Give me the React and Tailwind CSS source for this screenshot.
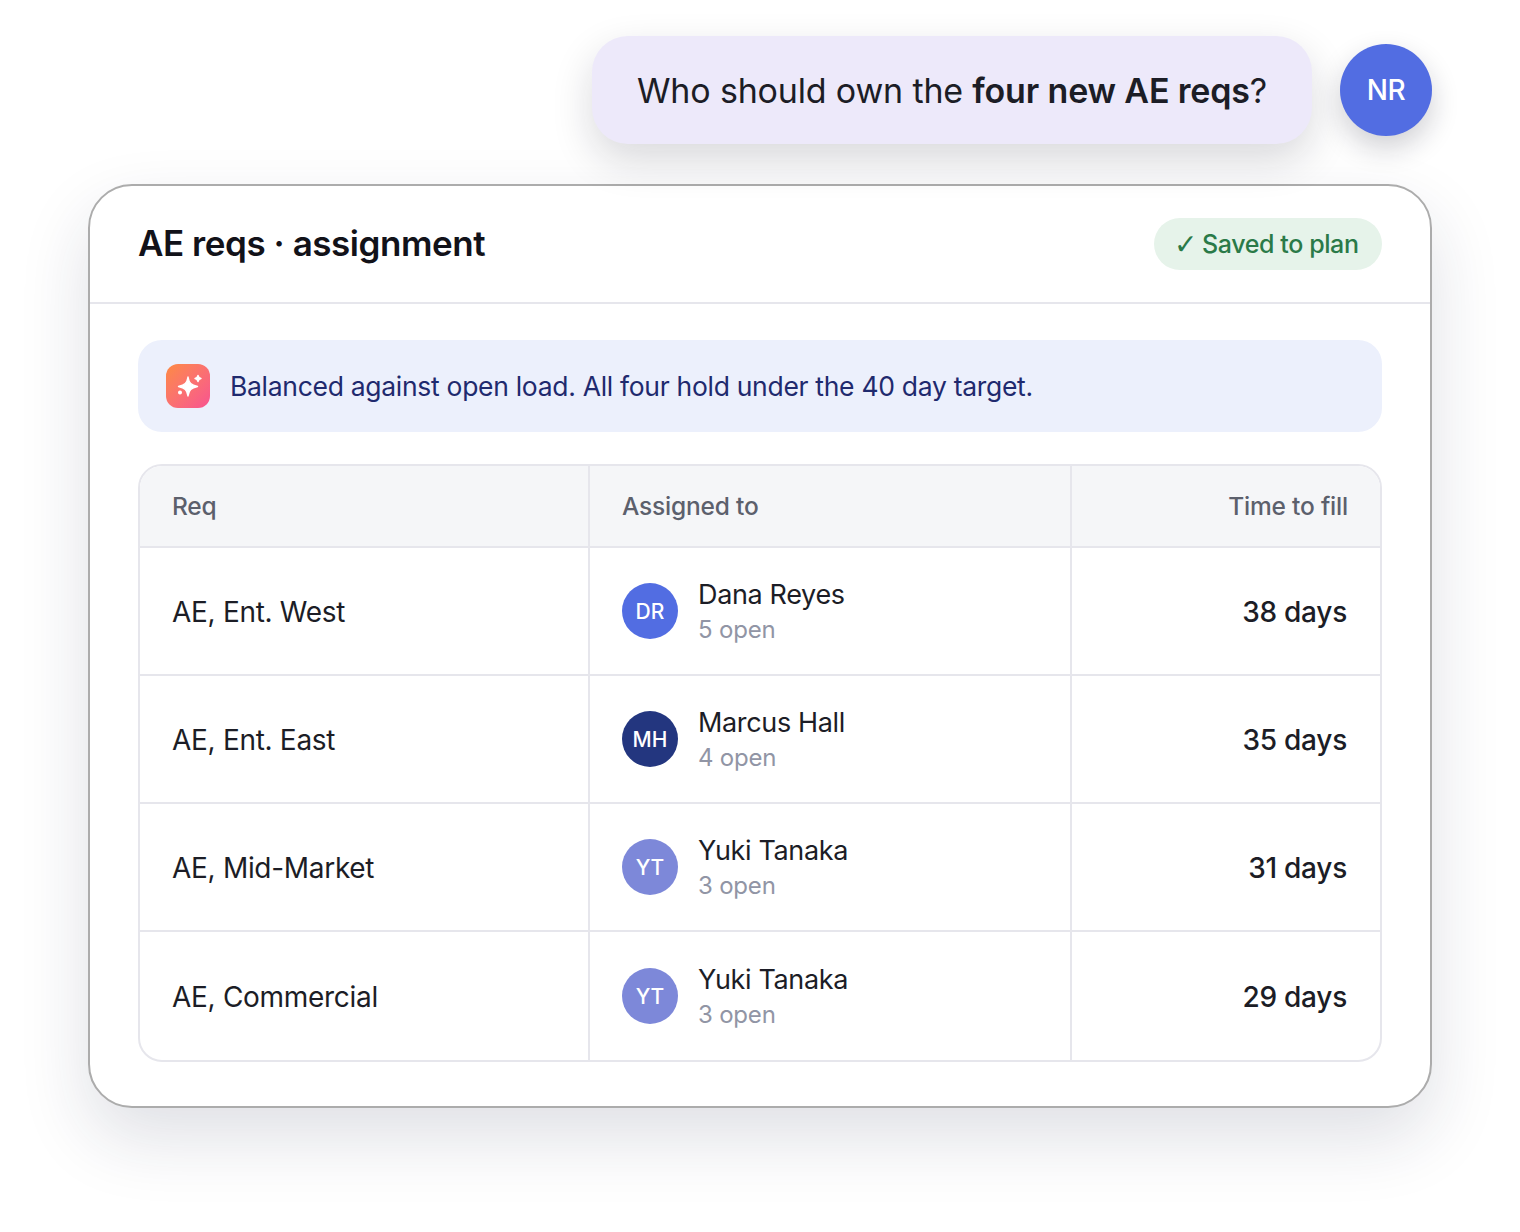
const rows = [
  { req: "AE, Ent. West", init: "DR", bg: "bg-[#526de2]", name: "Dana Reyes", open: "5 open", days: "38 days", h: "h-[128px] border-b-2" },
  { req: "AE, Ent. East", init: "MH", bg: "bg-[#23367f]", name: "Marcus Hall", open: "4 open", days: "35 days", h: "h-[128px] border-b-2" },
  { req: "AE, Mid-Market", init: "YT", bg: "bg-[#7d88d9]", name: "Yuki Tanaka", open: "3 open", days: "31 days", h: "h-[128px] border-b-2" },
  { req: "AE, Commercial", init: "YT", bg: "bg-[#7d88d9]", name: "Yuki Tanaka", open: "3 open", days: "29 days", h: "h-[128px]" },
];

export default function App() {
  return (
    <div className="w-[1520px] h-[1232px] bg-white overflow-hidden pt-[36px] pl-[88px] font-['Inter',sans-serif] text-[#1c1d26]">
      <div className="w-[1344px] flex items-center justify-end gap-[28px]">
        <div className="h-[108px] w-[720px] rounded-[36px] bg-[#ede9fa] flex items-center justify-center text-[34px] tracking-[-0.17px] shadow-[0_16px_40px_rgba(20,20,40,0.16)]">
          <span>Who should own the <b className="font-semibold">four new AE reqs</b>?</span>
        </div>
        <div className="w-[92px] h-[92px] rounded-full bg-[#526de2] text-white flex items-center justify-center text-[28px] font-medium tracking-[-0.5px] shadow-[0_12px_28px_rgba(20,20,40,0.2)]">NR</div>
      </div>

      <div className="mt-[40px] w-[1344px] h-[924px] bg-white rounded-[44px] border-2 border-[#acacac] shadow-[0_30px_70px_rgba(30,35,70,0.14)]">
        <div className="h-[118px] border-b-2 border-[#e6e6ec] flex items-center justify-between px-[48px]">
          <div className="pb-[2px] text-[35px] font-semibold tracking-[-0.45px] text-[#121219]">AE reqs · assignment</div>
          <div className="h-[52px] w-[228px] rounded-full bg-[#e6f3ea] text-[#2a7a48] flex items-center pl-[20px] gap-[5px] pt-[2px] text-[25px] font-medium tracking-[-0.4px]">
            <span className="font-['DejaVu_Sans',sans-serif] font-bold text-[28px] leading-none">✓</span>
            <span>Saved to plan</span>
          </div>
        </div>

        <div className="px-[48px] pt-[36px]">
          <div className="h-[92px] rounded-[24px] bg-[#ecf0fc] flex items-center pl-[28px] gap-[20px]">
            <div className="w-[44px] h-[44px] rounded-[12px] bg-gradient-to-br from-[#fd8a40] to-[#f8528f] flex items-center justify-center">
              <svg width="44" height="44" viewBox="0 0 44 44" fill="white" stroke="white" strokeWidth="1.4" strokeLinejoin="round">
                <path d="M22 13c1 6 3 8 9.500 9.500-6.500 1.500-8.500 3.500-9.500 9.500-1-6-3-8-9.500-9.500 6.500-1.500 8.500-3.500 9.500-9.500z" />
                <path d="M32 11.500c.5 2.200 1 2.700 3 3-2 .3-2.500.8-3 3-.5-2.200-1-2.700-3-3 2-.3 2.500-.8 3-3z" />
                <circle cx="14" cy="28.500" r="1.300" />
              </svg>
            </div>
            <div className="pt-[2px] text-[26.500px] tracking-[-0.3px] text-[#1f2a6e]">Balanced against open load. All four hold under the 40 day target.</div>
          </div>

          <div className="mt-[32px] h-[598px] rounded-[24px] border-2 border-[#e6e6ec] overflow-hidden">
            <div className="grid grid-cols-[450px_482px_1fr] h-[82px] bg-[#f5f6f8] border-b-2 border-[#e6e6ec] text-[24.500px] font-medium text-[#5c606c] tracking-[-0.2px]">
              <div className="flex items-center pl-[32px] border-r-2 border-[#e6e6ec]">Req</div>
              <div className="flex items-center pl-[32px] border-r-2 border-[#e6e6ec]">Assigned to</div>
              <div className="flex items-center justify-end pr-[32px]">Time to fill</div>
            </div>
            {rows.map((r, i) => (
              <div key={i} className={`grid grid-cols-[450px_482px_1fr] border-[#e6e6ec] ${r.h}`}>
                <div className="flex items-center pl-[32px] pt-[2px] border-r-2 border-[#e6e6ec] text-[28px] tracking-[-0.3px]">{r.req}</div>
                <div className="flex items-center pl-[32px] gap-[20px] border-r-2 border-[#e6e6ec]">
                  <div className={`w-[56px] h-[56px] rounded-full ${r.bg} text-white flex items-center justify-center pt-[2px] text-[21px] font-medium`}>{r.init}</div>
                  <div className="flex flex-col pt-[2px]">
                    <div className="text-[27px] leading-[36px] tracking-[-0.35px]">{r.name}</div>
                    <div className="text-[24px] leading-[34px] tracking-[-0.2px] text-[#9195a5]">{r.open}</div>
                  </div>
                </div>
                <div className="flex items-center justify-end pr-[33px] pt-[2px] text-[28px] font-medium tracking-[-0.25px]">{r.days}</div>
              </div>
            ))}
          </div>
        </div>
      </div>
    </div>
  );
}
